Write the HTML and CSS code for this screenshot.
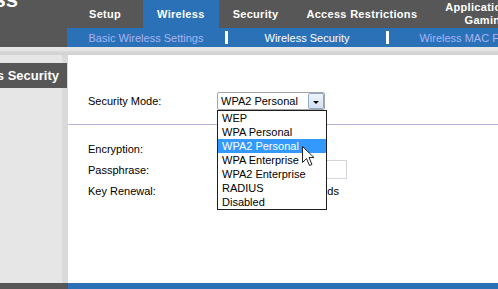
FILE: index.html
```html
<!DOCTYPE html>
<html lang="en">
<head>
    <meta charset="UTF-8">
    <meta name="viewport" content="width=device-width, initial-scale=1.0">
    <title>Wireless Security</title>
    <link rel="stylesheet" href="styles.css">
</head>
<body>
    <div class="page">
        <header class="topbar">
            <div class="brand"><span class="brand-name">Wireless</span></div>
            <nav class="tabs">
                <a class="tab tab-first">Setup</a>
                <a class="tab active">Wireless</a>
                <a class="tab">Security</a>
                <a class="tab">Access Restrictions</a>
                <a class="tab tab-two">Applications &amp;<br>Gaming</a>
            </nav>
        </header>

        <div class="subbar">
            <div class="subbar-side"></div>
            <nav class="subtabs">
                <a class="subtab">Basic Wireless Settings</a>
                <span class="sep"></span>
                <a class="subtab current">Wireless Security</a>
                <span class="sep"></span>
                <a class="subtab">Wireless MAC Filter</a>
            </nav>
        </div>

        <div class="main">
            <aside class="sidebar">
                <div class="section-title">Wireless Security</div>
            </aside>

            <section class="content">
                <div class="row mode-row">
                    <label class="field-label">Security Mode:</label>
                    <div class="select-wrap">
                        <div class="select">
                            <span class="select-value">WPA2 Personal</span>
                            <span class="select-btn"><span class="arrow"></span></span>
                        </div>
                        <ul class="options">
                            <li>WEP</li>
                            <li>WPA Personal</li>
                            <li class="hover">WPA2 Personal</li>
                            <li>WPA Enterprise</li>
                            <li>WPA2 Enterprise</li>
                            <li>RADIUS</li>
                            <li>Disabled</li>
                        </ul>
                        <svg class="pointer" width="13" height="20" viewBox="0 0 13 20">
                            <path d="M0.5 0.5 L0.5 16.5 L4.5 12.5 L7.5 19.5 L10 18.5 L7 11.5 L12 11.5 Z" fill="#fff" stroke="#222" stroke-width="1"/>
                        </svg>
                    </div>
                </div>

                <hr class="divider">

                <div class="row">
                    <label class="field-label">Encryption:</label>
                </div>
                <div class="row">
                    <label class="field-label">Passphrase:</label>
                    <input class="text-input pass" type="text">
                </div>
                <div class="row">
                    <label class="field-label">Key Renewal:</label>
                    <input class="text-input renewal" type="text">
                    <span class="unit">seconds</span>
                </div>
            </section>
        </div>

        <footer class="footer">
            <div class="footer-side"></div>
            <div class="footer-main"></div>
        </footer>
    </div>
</body>
</html>
```

FILE: styles.css
```css
body {
    margin: 0;
    padding: 0;
    font-family: "Liberation Sans", Arial, sans-serif;
    font-size: 11px;
    background-color: #ffffff;
    overflow: hidden;
}

.page {
    width: 498px;
    height: 289px;
    display: flex;
    flex-direction: column;
    overflow: hidden;
}

/* top navigation */

.topbar {
    height: 28px;
    display: flex;
    background-color: #575757;
    flex-shrink: 0;
    overflow: hidden;
}

.brand {
    width: 67px;
    flex-shrink: 0;
    overflow: hidden;
    display: flex;
    justify-content: flex-end;
    align-items: flex-start;
}

.brand-name {
    color: #ffffff;
    font-weight: bold;
    font-size: 22px;
    line-height: 22px;
    margin-top: -11px;
    margin-right: 49px;
    white-space: nowrap;
}

.tabs {
    display: flex;
    white-space: nowrap;
}

.tab {
    color: #ffffff;
    font-weight: bold;
    font-size: 11px;
    letter-spacing: 0.3px;
    padding: 0 14px;
    line-height: 28px;
}

.tab-first {
    padding-left: 22px;
    padding-right: 22px;
}

.tab.active {
    background-color: #2b71b8;
}

.tab-two {
    line-height: 13px;
    padding-top: 1px;
    text-align: center;
}

/* second level */

.subbar {
    height: 19px;
    display: flex;
    flex-shrink: 0;
}

.subbar-side {
    width: 67px;
    flex-shrink: 0;
    background-color: #575757;
}

.subtabs {
    flex: 1;
    min-width: 0;
    overflow: hidden;
    display: flex;
    align-items: center;
    background-color: #2b71b8;
    white-space: nowrap;
}

.subtab {
    width: 158px;
    flex-shrink: 0;
    text-align: center;
    color: #a8b4f2;
}

.subtab.current {
    color: #ffffff;
}

.sep {
    width: 3px;
    height: 13px;
    background-color: #ffffff;
    flex-shrink: 0;
}

/* body */

.main {
    flex: 1;
    display: flex;
    background-color: #e6e6e6;
    background-image: linear-gradient(#e6e6e6 0, #e6e6e6 3px, #d6d6d6 5px, #d2d2d2 8px, #e6e6e6 8px);
    background-repeat: no-repeat;
    background-size: 100% 8px;
    padding-top: 8px;
}

.sidebar {
    width: 62px;
    flex-shrink: 0;
    padding-top: 8px;
    position: relative;
    z-index: 1;
}

.section-title {
    width: 67px;
    height: 25px;
    background-color: #575757;
    color: #ffffff;
    font-weight: bold;
    font-size: 13px;
    line-height: 25px;
    display: flex;
    justify-content: flex-end;
    padding-right: 8px;
    box-sizing: border-box;
    white-space: nowrap;
    overflow: hidden;
}

.content {
    flex: 1;
    background-color: #ffffff;
    border-left: 6px solid #c4c4c4;
    border-image: linear-gradient(to right, #dadada, #a6a6a6) 1;
    padding-top: 37px;
    color: #000000;
}

.row {
    display: flex;
    align-items: center;
    height: 21px;
    padding-left: 20px;
}

.mode-row {
    height: 18px;
}

.field-label {
    width: 129px;
    flex-shrink: 0;
}

.divider {
    border: none;
    border-top: 1px solid #b6b6de;
    margin: 14px 0 13px 0;
}

/* select */

.select-wrap {
    position: relative;
}

.select {
    width: 108px;
    height: 18px;
    box-sizing: border-box;
    border: 1px solid #a4a4a4;
    border-radius: 2px;
    display: flex;
    align-items: center;
    background-color: #ffffff;
}

.select-value {
    flex: 1;
    padding-left: 3px;
}

.select-btn {
    width: 16px;
    height: 16px;
    box-sizing: border-box;
    border: 1px solid #90a8c8;
    border-radius: 2px;
    background: linear-gradient(#eef4fb, #d3e1f1);
    display: flex;
    align-items: center;
    justify-content: center;
}

.arrow {
    width: 0;
    height: 0;
    border-left: 3px solid transparent;
    border-right: 3px solid transparent;
    border-top: 3px solid #000000;
    margin-top: 2px;
}

.options {
    position: absolute;
    top: 18px;
    left: 0;
    width: 110px;
    margin: 0;
    padding: 0;
    list-style: none;
    background-color: #ffffff;
    border: 1px solid #1e1e1e;
    box-sizing: border-box;
    z-index: 2;
}

.options li {
    height: 14px;
    line-height: 14px;
    padding-left: 4px;
    white-space: nowrap;
}

.options li.hover {
    background-color: #3399ff;
    color: #ffffff;
}

.pointer {
    position: absolute;
    left: 85px;
    top: 54px;
    z-index: 3;
}

/* inputs */

.text-input {
    height: 19px;
    box-sizing: border-box;
    border: 1px solid #d2d6dc;
    padding: 0 3px;
    font-family: inherit;
    font-size: 11px;
}

.pass {
    width: 130px;
}

.renewal {
    width: 76px;
}

.unit {
    margin-left: 5px;
}

/* footer */

.footer {
    height: 6px;
    display: flex;
    flex-shrink: 0;
}

.footer-side {
    width: 68px;
    background-color: #575757;
}

.footer-main {
    flex: 1;
    background-color: #2b71b8;
}
```
